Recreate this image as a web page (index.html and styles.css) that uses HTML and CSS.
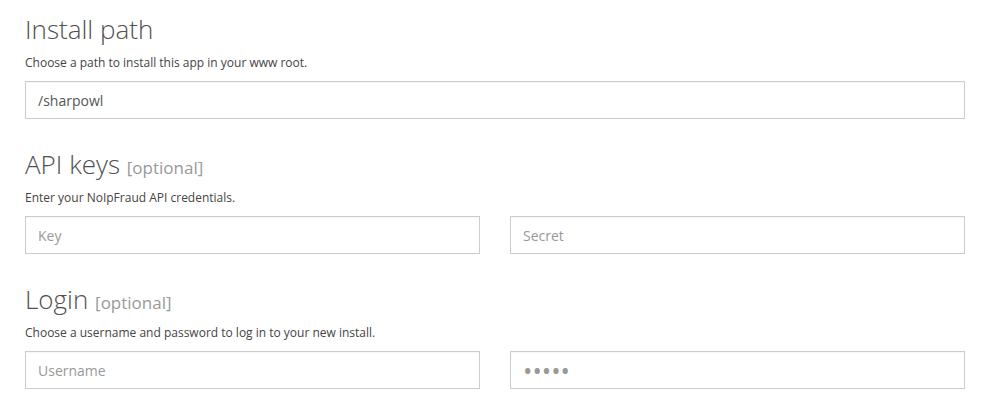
FILE: index.html
```html
<!DOCTYPE html>
<html>
<head>
<meta charset="utf-8">
<link rel="stylesheet" href="styles.css">
</head>
<body>
<form class="form">
  <section class="section">
    <h2 class="title">Install path</h2>
    <p class="desc">Choose a path to install this app in your www root.</p>
    <div class="row">
      <input class="field" type="text" value="/sharpowl">
    </div>
  </section>
  <section class="section">
    <h2 class="title">API keys <span class="opt">[optional]</span></h2>
    <p class="desc">Enter your NoIpFraud API credentials.</p>
    <div class="row two">
      <input class="field" type="text" placeholder="Key">
      <input class="field" type="text" placeholder="Secret">
    </div>
  </section>
  <section class="section">
    <h2 class="title">Login <span class="opt">[optional]</span></h2>
    <p class="desc">Choose a username and password to log in to your new install.</p>
    <div class="row two">
      <input class="field" type="text" placeholder="Username">
      <input class="field pw" type="password" value="admin">
    </div>
  </section>
</form>
</body>
</html>
```
FILE: styles.css
```css
html, body {
  margin: 0;
  padding: 0;
  background: #fff;
}
body {
  font-family: "Open Sans", "Liberation Sans", sans-serif;
  color: #444;
}
.form {
  padding: 13px 30px 0 25px;
  display: flex;
  flex-direction: column;
}
.section {
  margin-bottom: 29px;
}
.title {
  margin: 0;
  height: 32px;
  font-size: 26px;
  line-height: 32px;
  font-weight: 300;
  color: #505050;
}
.opt {
  font-size: 17px;
  line-height: 1;
  color: #999;
  font-weight: 400;
}
.desc {
  margin: 10px 0 10px;
  font-size: 12px;
  line-height: 16px;
  color: #444;
}
.row {
  display: grid;
  grid-template-columns: 1fr;
  gap: 30px;
}
.row.two {
  grid-template-columns: 1fr 1fr;
}
.field {
  box-sizing: border-box;
  height: 38px;
  width: 100%;
  border: 1px solid #ccc;
  border-radius: 0;
  padding: 0 12px;
  font-family: "Open Sans", "Liberation Sans", sans-serif;
  font-size: 14px;
  color: #555;
  background: #fff;
  outline: none;
  box-shadow: inset 0 1px 1px rgba(0,0,0,0.04);
}
.field::placeholder {
  color: #999;
}
.field.pw {
  color: #999;
  font-size: 25px;
  letter-spacing: 0;
}
```
